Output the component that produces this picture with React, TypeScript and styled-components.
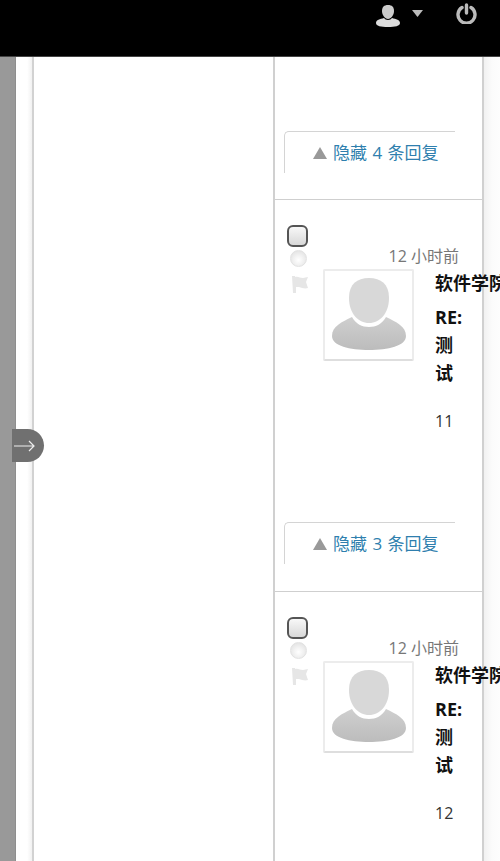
import React from "react";
import styled, { createGlobalStyle } from "styled-components";

const Global = createGlobalStyle`
  html, body { margin: 0; padding: 0; background: #fff; overflow: hidden; height: 861px; }
  body { font-family: "Open Sans", "Noto Sans CJK SC", sans-serif; color: #222; }
  * { box-sizing: border-box; }
`;

const Page = styled.div`
  position: relative;
  width: 500px;
  height: 861px;
  overflow: hidden;
  display: flex;
  flex-direction: column;
`;

const TopBar = styled.header`
  height: 57px;
  flex: none;
  background: #000;
  border-bottom: 1px solid #444;
  display: flex;
  justify-content: flex-end;
  align-items: flex-start;
  padding: 3px 23px 0 0;
`;

const UserMenu = styled.div`
  display: flex;
  align-items: flex-start;
  gap: 12px;
  margin-right: 33px;
`;

const UserIcon = styled.svg`
  display: block;
  width: 24px;
  height: 22px;
  margin-top: 2px;
`;

const Caret = styled.svg`
  display: block;
  width: 11px;
  height: 7px;
  margin-top: 7px;
`;

const PowerIcon = styled.svg`
  display: block;
  width: 21px;
  height: 21px;
`;

const Shell = styled.div`
  flex: 1;
  display: flex;
  min-height: 0;
`;

const SideRail = styled.aside`
  width: 16px;
  flex: none;
  background: #999;
  border-right: 1px solid #8e8e8e;
`;

const Gutter = styled.div`
  width: 16px;
  flex: none;
  background: linear-gradient(90deg, #fff 0, #fff 70%, #f1f1f1 100%);
`;

const MainPane = styled.main`
  width: 241px;
  flex: none;
  border-left: 2px solid #d2d2d2;
  background: #fff;
`;

const ThreadPane = styled.section`
  width: 211px;
  flex: none;
  border-left: 2px solid #d0d0d0;
  border-right: 2px solid #d0d0d0;
  background: #fff;
`;

const Margin = styled.div`
  flex: 1;
  background: linear-gradient(90deg, #f1f1f1 0, #fbfbfb 50%, #fdfdfd 100%);
`;

const TopSection = styled.div`
  height: 143px;
  padding: 74px 0 0 9px;
  border-bottom: 1px solid #cfcfcf;
`;

const Thread = styled.article`
  height: 392px;
  padding-top: 25px;
  border-bottom: 1px solid #cfcfcf;
  position: relative;
`;

const ThreadRow = styled.div`
  display: flex;
  padding-left: 12px;
`;

const Controls = styled.div`
  width: 36px;
  flex: none;
  display: flex;
  flex-direction: column;
`;

const CheckBox = styled.span`
  display: block;
  width: 21px;
  height: 22px;
  border: 2px solid #555;
  border-radius: 6px;
  background: linear-gradient(180deg, #f8f8f8, #d8d8d8);
`;

const Radio = styled.span`
  display: block;
  width: 17px;
  height: 17px;
  margin: 3px 0 0 3px;
  border-radius: 50%;
  border: 1px solid #e2e2e2;
  background: radial-gradient(circle at 50% 60%, #fff 0, #f0f0f0 45%, #dcdcdc 100%);
`;

const FlagIcon = styled.svg`
  display: block;
  width: 18px;
  height: 18px;
  margin: 8px 0 0 4px;
`;

const Body = styled.div`
  width: 136px;
  flex: none;
`;

const Time = styled.div`
  height: 41px;
  padding-top: 20px;
  font-size: 16px;
  line-height: 22px;
  color: #777;
  text-align: right;
  white-space: nowrap;
`;

const Meta = styled.div`
  display: flex;
  margin-top: 3px;
`;

const AvatarFrame = styled.div`
  width: 91px;
  height: 92px;
  flex: none;
  border: 2px solid #ececec;
  border-bottom-color: #dedede;
  border-radius: 2px;
  background: #fff;
  display: flex;
  align-items: flex-end;
  justify-content: center;
  padding-bottom: 9px;
`;

const AvatarIcon = styled.svg`
  display: block;
  width: 74px;
  height: 72px;
`;

const Text = styled.div`
  margin-left: 21px;
  width: 28px;
  padding-top: 1px;
`;

const Author = styled.div`
  font-size: 18px;
  line-height: 26px;
  font-weight: 700;
  color: #111;
  white-space: nowrap;
`;

const Subject = styled.div`
  margin-top: 7px;
  font-size: 18px;
  line-height: 28px;
  font-weight: 700;
  color: #111;
`;

const Content = styled.div`
  margin-top: 20px;
  font-size: 16px;
  line-height: 28px;
  color: #333;
`;

const HideTab = styled.div`
  width: 171px;
  height: 42px;
  border-top: 1px solid #d4d4d4;
  border-left: 1px solid #d4d4d4;
  border-top-left-radius: 5px;
  display: flex;
  align-items: flex-start;
  gap: 6px;
  padding: 9px 0 0 28px;
  font-size: 17px;
  line-height: 24px;
  word-spacing: 1px;
  color: #2f7fae;
  white-space: nowrap;
`;

const TabSlot = styled.div`
  position: absolute;
  left: 9px;
  top: 322px;
`;

const Triangle = styled.span`
  width: 0;
  height: 0;
  margin-top: 6px;
  border-left: 7.5px solid transparent;
  border-right: 7.5px solid transparent;
  border-bottom: 12px solid #999;
`;

const DrawerHandle = styled.div`
  position: absolute;
  left: 12px;
  top: 429px;
  width: 32px;
  height: 33px;
  background: #707070;
  border-radius: 0 17px 17px 0;
  display: flex;
  align-items: center;
  justify-content: center;
  padding-right: 7px;
`;

const threads = [
  { body: "11", replies: 3 },
  { body: "12", replies: 2 },
];

const Avatar = ({ id }: { id: string }) => (
  <AvatarIcon viewBox="0 0 74 72">
    <defs>
      <linearGradient id={id} x1="0" y1="0" x2="0" y2="1">
        <stop offset="0" stopColor="#cfcfcf" />
        <stop offset="1" stopColor="#bcbcbc" />
      </linearGradient>
    </defs>
    <path d="M0 58C0 48 10 44 20 39C24 46 30 49 37 49C44 49 50 46 54 39C64 44 74 48 74 58C74 68 56 72 37 72C18 72 0 68 0 58Z" fill={`url(#${id})`} />
    <path d="M37 0C49 0 57 6 57 20C57 35 48 45 37 45C26 45 17 35 17 20C17 6 25 0 37 0Z" fill="#d8d8d8" />
  </AvatarIcon>
);

const ThreadItem = ({ body, replies }: { body: string; replies: number }) => (
  <Thread>
    <ThreadRow>
      <Controls>
        <CheckBox />
        <Radio />
        <FlagIcon viewBox="0 0 18 18">
          <path d="M1 1h3v1c3-1 5 1 8 1l5-1-2 5 2 6c-3 1-6 0-9-1H5v6H2z" fill="#e6e6e6" />
        </FlagIcon>
      </Controls>
      <Body>
        <Time>12 小时前</Time>
        <Meta>
          <AvatarFrame>
            <Avatar id={`avatar-${body}`} />
          </AvatarFrame>
          <Text>
            <Author>软件学院</Author>
            <Subject>RE: 测试</Subject>
            <Content>{body}</Content>
          </Text>
        </Meta>
      </Body>
    </ThreadRow>
    <TabSlot>
      <HideTab>
        <Triangle />
        隐藏 {replies} 条回复
      </HideTab>
    </TabSlot>
  </Thread>
);

export default function App() {
  return (
    <Page>
      <Global />
      <TopBar>
        <UserMenu>
          <UserIcon viewBox="0 0 24 22">
            <path d="M0 18c0-3 4-4 8-5 1 1 2 2 4 2s3-1 4-2c4 1 8 2 8 5 0 3-5 4-12 4S0 21 0 18z" fill="#ddd" />
            <path d="M12 0c4 0 6 2 6 6 0 4-3 8-6 8S6 10 6 6c0-4 2-6 6-6z" fill="#ccc" />
          </UserIcon>
          <Caret viewBox="0 0 11 7">
            <path d="M0 0h11L5.5 7z" fill="#bbb" />
          </Caret>
        </UserMenu>
        <PowerIcon viewBox="0 0 21 21" fill="none" stroke="#bbb" strokeWidth="3.4" strokeLinecap="round">
          <path d="M6 4.5a8.5 8.5 0 1 0 9 0" />
          <path d="M10.5 2v8" />
        </PowerIcon>
      </TopBar>
      <Shell>
        <SideRail />
        <Gutter />
        <MainPane />
        <ThreadPane>
          <TopSection>
            <HideTab>
              <Triangle />
              隐藏 4 条回复
            </HideTab>
          </TopSection>
          {threads.map((t) => (
            <ThreadItem key={t.body} body={t.body} replies={t.replies} />
          ))}
        </ThreadPane>
        <Margin />
      </Shell>
      <DrawerHandle>
        <svg width="22" height="12" viewBox="0 0 22 12" fill="none" stroke="#eee" strokeWidth="1.2">
          <path d="M0 6h20M15 1l5 5-5 5" />
        </svg>
      </DrawerHandle>
    </Page>
  );
}
